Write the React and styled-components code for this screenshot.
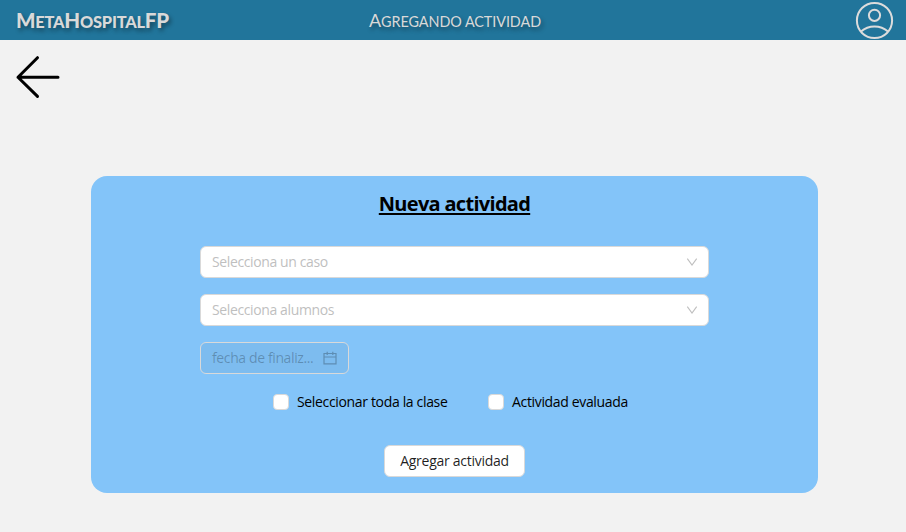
import React from "react";
import styled, { createGlobalStyle } from "styled-components";

const GlobalStyle = createGlobalStyle`
  *, *::before, *::after { box-sizing: border-box; }
  body {
    margin: 0;
    background: #f2f2f2;
    font-family: "Open Sans", "Noto Sans", sans-serif;
    font-size: 14px;
    line-height: 22px;
    color: #000;
  }
`;

const Page = styled.div`
  display: flex;
  flex-direction: column;
  height: 532px;
  overflow: hidden;
`;

const Header = styled.header`
  display: grid;
  grid-template-columns: 1fr auto 1fr;
  grid-template-rows: 40px;
  align-items: center;
  flex: none;
  height: 40px;
  padding: 0 12px 0 16px;
  background: #21759b;
  color: #d9d9d9;
  font-family: Lato, "Open Sans", sans-serif;
  text-transform: uppercase;
  white-space: nowrap;
`;

const Brand = styled.div`
  font-size: 20.5px;
  line-height: 39px;
  font-weight: 900;
  letter-spacing: -0.22px;
  text-shadow: 2px 3px 4px rgba(0, 0, 0, 0.4);
`;

const Title = styled.h1`
  margin: 0;
  font-size: 18px;
  line-height: 38px;
  font-weight: 400;
  letter-spacing: -0.07px;
  text-shadow: 2px 3px 4px rgba(0, 0, 0, 0.4);
`;

const SmallCaps = styled.span`
  font-size: 0.8em;
  line-height: 1;
`;

const ProfileButton = styled.button`
  justify-self: end;
  display: flex;
  padding: 0;
  border: 0;
  background: none;
  color: #dcdcdc;
`;

const BackButton = styled.button`
  display: flex;
  align-self: flex-start;
  margin: 12px 0 0 12px;
  padding: 0;
  border: 0;
  background: none;
  color: #000;
`;

const Card = styled.form`
  display: flex;
  flex-direction: column;
  align-items: center;
  flex: none;
  width: 727px;
  height: 317px;
  margin: 74px 0 0 91px;
  padding: 12px 0 16px;
  border-radius: 16px;
  background: #83c4f9;
`;

const CardTitle = styled.h2`
  margin: 0;
  font-size: 20px;
  line-height: 32px;
  font-weight: 700;
  letter-spacing: -0.7px;
  text-decoration: underline;
  text-decoration-thickness: 2px;
  text-underline-offset: 2px;
  text-decoration-skip-ink: none;
`;

const Fields = styled.div`
  display: flex;
  flex-direction: column;
  gap: 16px;
  width: 509px;
  margin-top: 26px;
`;

const Field = styled.div`
  display: flex;
  align-items: center;
  justify-content: space-between;
  width: ${(p) => (p.$disabled ? "149px" : "100%")};
  height: 32px;
  padding: 0 ${(p) => (p.$disabled ? "11px" : "10px")} 0 11px;
  border: 1px solid #d9d9d9;
  border-radius: 6px;
  background: ${(p) => (p.$disabled ? "rgba(0, 0, 0, 0.04)" : "#fff")};
  color: ${(p) => (p.$disabled ? "rgba(0, 0, 0, 0.25)" : "#bfbfbf")};
`;

const Placeholder = styled.span`
  letter-spacing: -0.38px;
  white-space: nowrap;
`;

const Checks = styled.div`
  display: flex;
  width: 363px;
  margin-top: 17px;
`;

const CheckLabel = styled.label`
  display: flex;
  align-items: center;
  gap: 8px;
  width: ${(p) => p.$width};
  letter-spacing: -0.34px;
  white-space: nowrap;
`;

const Box = styled.span`
  flex: none;
  width: 16px;
  height: 16px;
  border: 1px solid #d9d9d9;
  border-radius: 4px;
  background: #fff;
`;

const Submit = styled.button`
  width: 141px;
  height: 32px;
  margin-top: auto;
  padding: 0;
  border: 1px solid #d9d9d9;
  border-radius: 6px;
  background: #fff;
  color: rgba(0, 0, 0, 0.88);
  font: inherit;
  letter-spacing: -0.27px;
  white-space: nowrap;
`;

const ProfileIcon = () => (
  <svg width="39" height="40" viewBox="0 0 39 40" fill="none" stroke="currentColor" strokeWidth="2">
    <circle cx="19.5" cy="20.5" r="17.6" />
    <circle cx="19.5" cy="15.3" r="5.6" />
    <path d="M6 31.5C10 28 14.5 26.5 19.5 26.5S29 28 33 31.5" />
  </svg>
);

const BackIcon = () => (
  <svg width="50" height="50" viewBox="0 0 50 50" fill="none" stroke="currentColor" strokeWidth="3" strokeLinecap="round" strokeLinejoin="round">
    <path d="M46 25.2H6M25.5 5.7L6 25.2L25.5 44.4" />
  </svg>
);

const ChevronIcon = () => (
  <svg width="12" height="12" viewBox="0 0 12 12" fill="none" stroke="currentColor" strokeWidth="1.1">
    <path d="M1.3 2.7L6 9L10.7 2.7" />
  </svg>
);

const CalendarIcon = () => (
  <svg width="14" height="14" viewBox="0 0 14 14" fill="none" stroke="currentColor" strokeWidth="1.2">
    <path d="M1 2.5H13V12.8H1ZM1 6H13M4.2 .8V4M9.8 .8V4" />
  </svg>
);

export default function App() {
  return (
    <Page>
      <GlobalStyle />
      <Header>
        <Brand>
          M<SmallCaps>eta</SmallCaps>H<SmallCaps>ospital</SmallCaps>FP
        </Brand>
        <Title>
          A<SmallCaps>gregando actividad</SmallCaps>
        </Title>
        <ProfileButton type="button" aria-label="Perfil">
          <ProfileIcon />
        </ProfileButton>
      </Header>
      <BackButton type="button" aria-label="Volver">
        <BackIcon />
      </BackButton>
      <Card>
        <CardTitle>Nueva actividad</CardTitle>
        <Fields>
          <Field>
            <Placeholder>Selecciona un caso</Placeholder>
            <ChevronIcon />
          </Field>
          <Field>
            <Placeholder>Selecciona alumnos</Placeholder>
            <ChevronIcon />
          </Field>
          <Field $disabled>
            <Placeholder>fecha de finaliz...</Placeholder>
            <CalendarIcon />
          </Field>
        </Fields>
        <Checks>
          <CheckLabel $width="215px">
            <Box />
            Seleccionar toda la clase
          </CheckLabel>
          <CheckLabel $width="auto">
            <Box />
            Actividad evaluada
          </CheckLabel>
        </Checks>
        <Submit type="button">Agregar actividad</Submit>
      </Card>
    </Page>
  );
}
